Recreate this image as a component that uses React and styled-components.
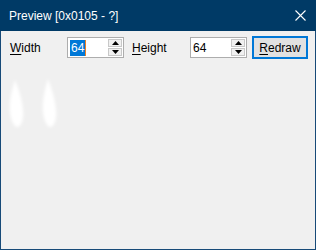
import React from "react"
import styled, { createGlobalStyle } from "styled-components"

const GlobalStyle = createGlobalStyle`
	html, body {
		margin: 0;
		padding: 0;
		background: #f0f0f0;
	}
	body {
		font-family: "Liberation Sans", Arial, sans-serif;
	}
`

const Window = styled.div`
	width: 316px;
	height: 250px;
	box-sizing: border-box;
	border: 1px solid #174a78;
	border-top: none;
	background: #f0f0f0;
	display: flex;
	flex-direction: column;
`

const TitleBar = styled.div`
	height: 31px;
	flex: none;
	background: #003a66;
	color: #ffffff;
	display: flex;
	align-items: center;
	justify-content: space-between;
	padding: 0 10px 0 9px;
	font-size: 12px;
	margin: 0 -1px;
	box-sizing: border-box;
`

const Title = styled.span`
	padding-top: 1px;
`

const CloseIcon = styled.svg`
	display: block;
`

const Toolbar = styled.div`
	display: flex;
	align-items: center;
	padding: 5px 0 0 9px;
	height: 23px;
`

const Label = styled.label`
	width: ${(p) => p.$width}px;
	margin-left: ${(p) => p.$gap || 0}px;
	font-size: 12px;
	color: #000000;
	flex: none;

	u {
		text-decoration: underline;
		text-underline-offset: 2px;
	}
`

const SpinField = styled.div`
	width: 57px;
	height: 21px;
	box-sizing: border-box;
	border: 1px solid #adadad;
	background: #ffffff;
	display: flex;
	align-items: center;
	padding: 1px 1px 1px 2px;
	flex: none;
`

const Value = styled.span`
	flex: 1;
	font-size: 12px;
	line-height: 16px;
	color: #000000;
	display: flex;
	align-items: center;
`

const Selected = styled.span`
	background: #0078d7;
	color: #ffffff;
	padding: 0 1px;
	border-right: 1px solid #f08020;
`

const Spinner = styled.div`
	width: 14px;
	height: 17px;
	display: flex;
	flex-direction: column;
	gap: 1px;
`

const SpinButton = styled.div`
	flex: 1;
	box-sizing: border-box;
	border: 1px solid #c8c8c8;
	background: #f0f0f0;
	display: flex;
	align-items: center;
	justify-content: center;
`

const Button = styled.button`
	width: 56px;
	height: 23px;
	margin-left: 5px;
	box-sizing: border-box;
	border: 2px solid #0078d7;
	background: #e1e1e1;
	font-family: "Liberation Sans", Arial, sans-serif;
	font-size: 12px;
	color: #000000;
	padding: 0;

	u {
		text-underline-offset: 2px;
	}
`

const Canvas = styled.svg`
	display: block;
	margin: 11px 0 0 3px;
`

const Arrow = ({ up }) => (
	<svg width="7" height="4" viewBox="0 0 7 4">
		<path d={up ? "M0 4 L3.5 0 L7 4 Z" : "M0 0 L3.5 4 L7 0 Z"} fill="#000" />
	</svg>
)

const NumberField = ({ value, selected }) => (
	<SpinField>
		<Value>{selected ? <Selected>{value}</Selected> : value}</Value>
		<Spinner>
			<SpinButton>
				<Arrow up />
			</SpinButton>
			<SpinButton>
				<Arrow />
			</SpinButton>
		</Spinner>
	</SpinField>
)

export default function App() {
	return (
		<>
			<GlobalStyle />
			<Window>
				<TitleBar>
					<Title>Preview [0x0105 - ?]</Title>
					<CloseIcon width="11" height="11" viewBox="0 0 11 11">
						<path d="M0.5 0.5 L10.5 10.5 M10.5 0.5 L0.5 10.5" stroke="#fff" strokeWidth="1.1" />
					</CloseIcon>
				</TitleBar>
				<Toolbar>
					<Label $width={57}>
						<u>W</u>idth
					</Label>
					<NumberField value="64" selected />
					<Label $width={58} $gap={8}>
						<u>H</u>eight
					</Label>
					<NumberField value="64" />
					<Button>
						<u>R</u>edraw
					</Button>
				</Toolbar>
				<Canvas width="64" height="64" viewBox="0 0 64 64">
					<defs>
						<filter id="soft" x="-50%" y="-50%" width="200%" height="200%">
							<feGaussianBlur stdDeviation="1.5" />
						</filter>
					</defs>
					<g fill="#ffffff" filter="url(#soft)">
						<path d="M11 10 C8 20 5 30 6 42 C7 52 11 57 13 57 C17 57 20 50 19 40 C18 28 14 18 11 10 Z" />
						<path d="M44 9 C41 19 38 30 39 42 C40 52 44 57 46 57 C50 57 53 50 52 40 C51 28 47 17 44 9 Z" />
					</g>
				</Canvas>
			</Window>
		</>
	)
}
